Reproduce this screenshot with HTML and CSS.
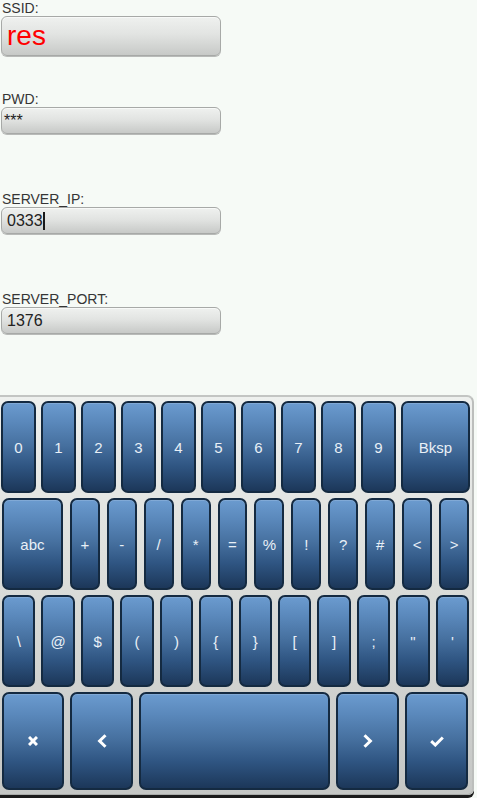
FILE: index.html
```html
<!DOCTYPE html>
<html>
<head>
<meta charset="utf-8">
<link rel="stylesheet" href="styles.css">
</head>
<body>
<div class="form">
  <div class="field">
    <div class="field-label">SSID:</div>
    <div class="input input-large">res</div>
  </div>
  <div class="field field-pwd">
    <div class="field-label">PWD:</div>
    <div class="input input-pwd">***</div>
  </div>
  <div class="field field-gap">
    <div class="field-label">SERVER_IP:</div>
    <div class="input">0333<span class="cursor"></span></div>
  </div>
  <div class="field field-gap">
    <div class="field-label">SERVER_PORT:</div>
    <div class="input">1376</div>
  </div>
</div>

<div class="keyboard">
  <div class="row row-digits">
    <div class="key">0</div>
    <div class="key">1</div>
    <div class="key">2</div>
    <div class="key">3</div>
    <div class="key">4</div>
    <div class="key">5</div>
    <div class="key">6</div>
    <div class="key">7</div>
    <div class="key">8</div>
    <div class="key">9</div>
    <div class="key key-bksp">Bksp</div>
  </div>
  <div class="row row-ops">
    <div class="key key-abc">abc</div>
    <div class="key">+</div>
    <div class="key">-</div>
    <div class="key">/</div>
    <div class="key">*</div>
    <div class="key">=</div>
    <div class="key">%</div>
    <div class="key">!</div>
    <div class="key">?</div>
    <div class="key">#</div>
    <div class="key">&lt;</div>
    <div class="key">&gt;</div>
  </div>
  <div class="row row-sym">
    <div class="key">\</div>
    <div class="key">@</div>
    <div class="key">$</div>
    <div class="key">(</div>
    <div class="key">)</div>
    <div class="key">{</div>
    <div class="key">}</div>
    <div class="key">[</div>
    <div class="key">]</div>
    <div class="key">;</div>
    <div class="key">"</div>
    <div class="key">'</div>
  </div>
  <div class="row row-actions">
    <div class="key key-close">
      <svg width="10" height="10" viewBox="0 0 10 10"><path d="M1 1 L9 9 M9 1 L1 9" stroke="#fff" stroke-width="3" fill="none"/></svg>
    </div>
    <div class="key key-nav">
      <svg width="10" height="14" viewBox="0 0 10 14"><path d="M8.5 1.2 L2.6 7 L8.5 12.8" stroke="#fff" stroke-width="3" fill="none"/></svg>
    </div>
    <div class="key key-space"></div>
    <div class="key key-nav">
      <svg width="10" height="14" viewBox="0 0 10 14"><path d="M1.5 1.2 L7.4 7 L1.5 12.8" stroke="#fff" stroke-width="3" fill="none"/></svg>
    </div>
    <div class="key key-nav">
      <svg width="14" height="11" viewBox="0 0 14 11"><path d="M1.2 5.2 L5.3 9 L12.8 1.5" stroke="#fff" stroke-width="3" fill="none"/></svg>
    </div>
  </div>
</div>
</body>
</html>
```

FILE: styles.css
```css
html, body {
  margin: 0;
  padding: 0;
}

body {
  width: 477px;
  height: 798px;
  overflow: hidden;
  background: #f6faf6;
  font-family: "Liberation Sans", Arial, sans-serif;
}

.field-label {
  font-size: 14px;
  line-height: 16px;
  color: #353535;
  padding-left: 2px;
}

.field-pwd {
  margin-top: 35px;
}

.field-gap {
  margin-top: 57px;
}

.input {
  box-sizing: border-box;
  width: 220px;
  height: 27px;
  margin-left: 1px;
  padding-left: 5px;
  border: 1px solid #a7a9a7;
  border-radius: 6px;
  background: linear-gradient(#eff1ef 0%, #e2e4e2 45%, #c7c9c7 100%);
  box-shadow: inset 0 1px 0 #f8f9f8, 0 1px 0 #b8bab8;
  font-size: 16px;
  line-height: 25px;
  color: #222;
  white-space: nowrap;
}

.input-large {
  height: 40px;
  line-height: 38px;
  font-size: 28px;
  color: #ff0000;
}

.input-pwd {
  padding-left: 2px;
}

.cursor {
  display: inline-block;
  width: 2px;
  height: 18px;
  background: #1a1a1a;
  vertical-align: -4px;
}

.keyboard {
  box-sizing: border-box;
  width: 474px;
  margin-top: 61px;
  padding: 4px 2px 4px 1px;
  border-style: solid;
  border-color: #c3c5c3 #bcbebc #a9aba9 transparent;
  border-width: 2px 2px 1px 0;
  border-radius: 0 7px 6px 0;
  background: linear-gradient(#eef0ee 0%, #d9dbd8 50%, #c5c7c5 100%);
  box-shadow: 0 3px 0 #1b1b1b;
  display: flex;
  flex-direction: column;
  gap: 5px;
}

.row {
  display: flex;
  height: 92px;
  gap: 6px;
  margin: 0 1px;
}

.row-digits {
  gap: 5px;
  margin: 0;
}

.row-ops {
  gap: 7px;
}

.row-actions {
  height: 98px;
}

.key {
  flex: 1 1 0;
  min-width: 0;
  box-sizing: border-box;
  border: 2px solid #142a41;
  border-radius: 7px;
  background: linear-gradient(#6b9bcf 0%, #5a88bb 22%, #46709f 48%, #2f5582 72%, #1c3759 100%);
  box-shadow: inset 0 1px 0 rgba(255, 255, 255, 0.15);
  color: #e9f0f7;
  font-size: 15px;
  display: flex;
  align-items: center;
  justify-content: center;
}

.row-digits .key {
  flex: 0 1 35px;
}

.row-digits .key-bksp {
  flex: 0 1 69px;
}

.row-ops .key {
  flex: 0 1 30px;
}

.row-ops .key-abc {
  flex: 0 1 61px;
}

.row-actions .key-close {
  flex: 0 1 62px;
}

.row-actions .key-nav {
  flex: 0 1 63px;
}

.row-actions .key-space {
  flex: 0 1 191px;
}

.key svg {
  display: block;
}
```
